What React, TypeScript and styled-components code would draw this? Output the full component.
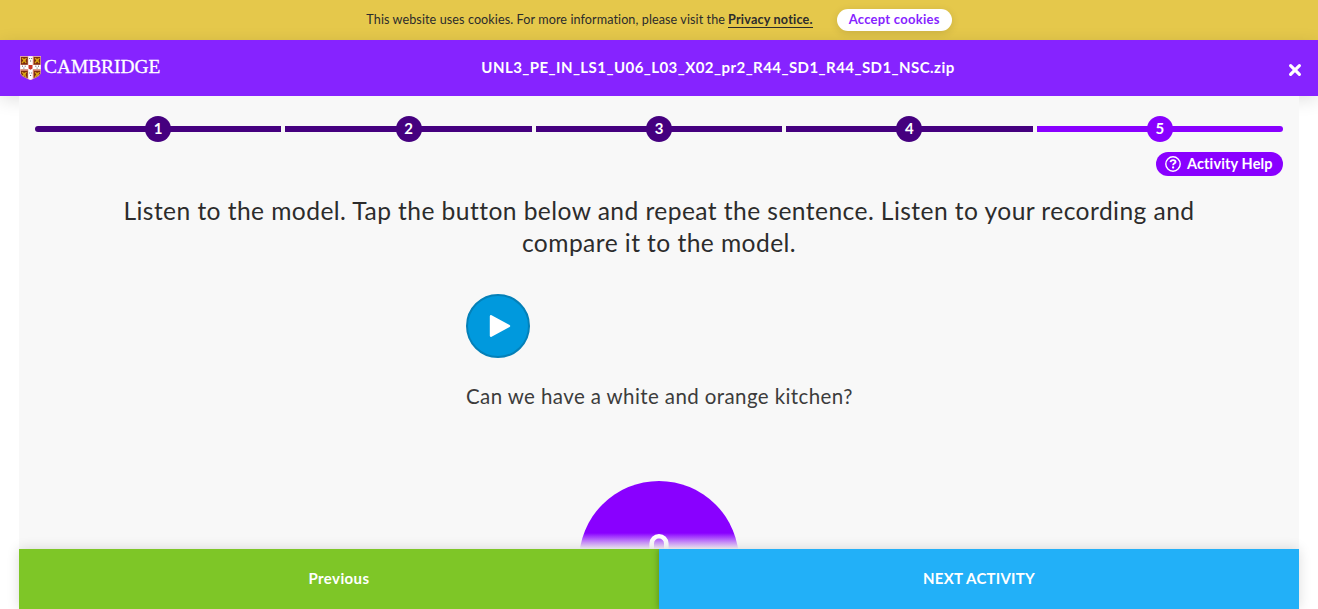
import React from "react";
import styled, { createGlobalStyle } from "styled-components";

const GlobalStyle = createGlobalStyle`
  * { box-sizing: border-box; }
  html, body { height: 100%; overflow: hidden; }
  body { margin: 0; background: #fff; color: #2c2c2c; font-family: Lato, "Open Sans", sans-serif; }
  button { font-family: inherit; border: 0; padding: 0; cursor: pointer; }
`;

const Page = styled.div`
  height: 100vh;
  display: flex;
  flex-direction: column;
  overflow: hidden;
`;

const CookieBar = styled.div`
  flex: 0 0 40px;
  display: flex;
  align-items: center;
  justify-content: center;
  background: #e5c84b;
  font-size: 12.6px;
  letter-spacing: 0.09px;
  white-space: nowrap;
`;

const CookieText = styled.span`
  padding-bottom: 1px;
`;

const PrivacyLink = styled.a`
  margin-left: 3px;
  font-weight: 700;
  letter-spacing: 0.19px;
  line-height: 15px;
  border-bottom: 1px solid #2c2c2c;
`;

const AcceptButton = styled.button`
  width: 115px;
  height: 22px;
  margin-left: 24px;
  border-radius: 11px;
  background: #fff;
  color: #8623ff;
  font-size: 13px;
  font-weight: 700;
  letter-spacing: 0.25px;
  line-height: 20px;
  padding-bottom: 2px;
  box-shadow: 0 2px 8px rgba(0, 0, 0, 0.12);
`;

const Header = styled.header`
  flex: 0 0 56px;
  display: grid;
  grid-template-columns: 274px 1fr 160px;
  align-items: center;
  padding: 0 16px 0 20px;
  background: #8623ff;
  color: #fff;
  box-shadow: 0 4px 18px rgba(0, 0, 0, 0.12);
`;

const Brand = styled.div`
  display: flex;
  align-items: center;
  gap: 3px;
  font: 400 19.4px/24px "Liberation Serif", serif;
`;

const Wordmark = styled.span`
  padding-bottom: 2px;
  -webkit-text-stroke: 0.3px currentColor;
`;

const Title = styled.h1`
  margin: 0;
  padding-bottom: 2px;
  text-align: center;
  white-space: nowrap;
  font-size: 15px;
  font-weight: 700;
  letter-spacing: 0.45px;
`;

const CloseButton = styled.button`
  justify-self: end;
  height: 14px;
  margin-top: 4px;
  background: none;
  color: #fff;
  svg { display: block; }
`;

const Activity = styled.main`
  position: relative;
  flex: 1;
  min-height: 0;
  margin: 0 19px;
  display: flex;
  flex-direction: column;
  background: #f8f8f8;
`;

const Scroller = styled.div`
  flex: 1;
  min-height: 0;
  overflow: hidden;
  display: flex;
  flex-direction: column;
  align-items: center;
  padding: 20px 16px 0;
`;

const Steps = styled.div`
  flex: none;
  width: 100%;
  display: flex;
  gap: 4px;
`;

const Step = styled.div<{ $active?: boolean }>`
  flex: 1;
  height: 26px;
  display: flex;
  align-items: center;
  color: ${(p) => (p.$active ? "#8900ff" : "#45007f")};
  &::before, &::after { content: ""; flex: 1; height: 6px; background: currentColor; }
  &:first-child::before { border-radius: 3px 0 0 3px; }
  &:last-child::after { border-radius: 0 3px 3px 0; }
`;

const StepDot = styled.div`
  width: 26px;
  height: 26px;
  margin: 0 -1px;
  padding-bottom: 2px;
  border-radius: 50%;
  background: currentColor;
  display: flex;
  align-items: center;
  justify-content: center;
  font-size: 15px;
  font-weight: 700;
  line-height: 24px;
  span { color: #fff; }
`;

const HelpButton = styled.button`
  flex: none;
  align-self: flex-end;
  display: flex;
  align-items: center;
  gap: 6px;
  width: 127px;
  height: 24px;
  margin-top: 10px;
  padding-left: 9px;
  border-radius: 12px;
  background: #8900ff;
  color: #fff;
  font-size: 14.5px;
  font-weight: 700;
  letter-spacing: 0.12px;
  white-space: nowrap;
  span { padding-bottom: 2px; }
`;

const Instructions = styled.h2`
  flex: none;
  width: 1120px;
  margin: 19px 0 0;
  text-align: center;
  font-size: 24.6px;
  font-weight: 400;
  line-height: 32px;
  letter-spacing: 0.43px;
`;

const Model = styled.section`
  flex: none;
  width: 386px;
  margin-top: 35px;
`;

const PlayButton = styled.button`
  display: flex;
  align-items: center;
  justify-content: center;
  width: 64px;
  height: 64px;
  border: 2px solid #0480b8;
  border-radius: 50%;
  background: #0099dd;
`;

const Sentence = styled.p`
  margin: 25px 0 2px;
  font-size: 20.5px;
  line-height: 26px;
  letter-spacing: 0.4px;
  white-space: nowrap;
  color: #3c3c3c;
`;

const RecordButton = styled.button`
  flex: none;
  width: 160px;
  height: 160px;
  margin-top: 70px;
  border-radius: 50%;
  background: #8900ff;
  display: flex;
  justify-content: center;
  padding-top: 51px;
`;

const Fade = styled.div`
  position: absolute;
  left: 0;
  right: 0;
  bottom: 60px;
  height: 16px;
  background: linear-gradient(rgba(248, 248, 248, 0), #f8f8f8);
`;

const Footer = styled.footer`
  position: relative;
  flex: 0 0 60px;
  display: flex;
  box-shadow: 0 0 12px rgba(0, 0, 0, 0.14);
`;

const NavButton = styled.button<{ $next?: boolean }>`
  flex: 1;
  padding-bottom: 2px;
  color: #fff;
  background: ${(p) => (p.$next ? "#22b0f8" : "#7ec627")};
  box-shadow: ${(p) => (p.$next ? "-1px 0 6px rgba(0, 0, 0, 0.25)" : "none")};
  clip-path: ${(p) => (p.$next ? "inset(0 0 0 -10px)" : "none")};
  font-size: 15px;
  font-weight: 700;
  letter-spacing: ${(p) => (p.$next ? "0.23px" : "0.4px")};
`;

function Crest() {
  const quarters = [[1, 1], [14, 1], [1, 15], [14, 15]];
  return (
    <svg width="21" height="24" viewBox="0 0 21 24">
      <clipPath id="shield"><path d="M0 0H21V16C21 20 15 22 10.5 24C6 22 0 20 0 16Z" /></clipPath>
      <g clipPath="url(#shield)">
        <path fill="#cf7a62" d="M0 0H21V24H0Z" />
        {quarters.map(([x, y]) => (
          <g key={`${x}-${y}`} transform={`translate(${x} ${y})`}>
            <path fill="#7c2c10" d="M0 0H6.6V7.4H0Z" />
            <path fill="none" stroke="#d9a512" strokeWidth="1.3" d="M1 1.2L2.6 2.5H5M2 4H4.6M1 6L2.4 4.4M5 6L4 4.2M5 1V2" />
          </g>
        ))}
        <path fill="#fff" d="M8.2 0H12.8V9H21V13.3H12.8V24H8.2V13.3H0V9H8.2Z" />
        <path stroke="#5d5460" strokeWidth="1" d="M9.3 2.5h.8M11.3 2.5h.8M10.1 5h1M9.3 17h.8M11.3 17h.8M10.1 19.5h1M2 10.2h1M4.7 10.2h1M3.4 12.1h1M15.3 10.2h1M18 10.2h1M16.6 12.1h1" />
        <path fill="#c93528" d="M8.5 9H12.5V12.5L10.5 13.7L8.5 12.5Z" />
      </g>
      <path fill="none" stroke="#f0c9cf" strokeWidth=".6" d="M.3.3H20.7V16C20.7 20 15 21.7 10.5 23.6C6 21.7 .3 20 .3 16Z" />
    </svg>
  );
}

export default function App() {
  return (
    <Page>
      <GlobalStyle />
      <CookieBar>
        <CookieText>This website uses cookies. For more information, please visit the</CookieText>
        <PrivacyLink>Privacy notice.</PrivacyLink>
        <AcceptButton>Accept cookies</AcceptButton>
      </CookieBar>
      <Header>
        <Brand><Crest /><Wordmark>CAMBRIDGE</Wordmark></Brand>
        <Title>UNL3_PE_IN_LS1_U06_L03_X02_pr2_R44_SD1_R44_SD1_NSC.zip</Title>
        <CloseButton aria-label="Close">
          <svg width="14" height="14" viewBox="0 0 14 14">
            <path d="M2.6 2.6L11.4 11.4M11.4 2.6L2.6 11.4" stroke="currentColor" strokeWidth="3.2" strokeLinecap="round" />
          </svg>
        </CloseButton>
      </Header>
      <Activity>
        <Scroller>
          <Steps>
            {[1, 2, 3, 4, 5].map((n) => (
              <Step key={n} $active={n === 5}><StepDot><span>{n}</span></StepDot></Step>
            ))}
          </Steps>
          <HelpButton>
            <svg width="16" height="16" viewBox="0 0 16 16" fill="none" stroke="currentColor">
              <circle cx="8" cy="8" r="7.2" strokeWidth="1.4" />
              <path strokeWidth="1.9" d="M5.5 6.2C5.7 4.6 7 4.1 8.1 4.1C9.5 4.1 10.5 4.8 10.5 5.9C10.5 7.4 8.1 7.3 8.1 9.3" />
              <circle cx="8.1" cy="11.5" r="1.15" fill="currentColor" stroke="none" />
            </svg>
            <span>Activity Help</span>
          </HelpButton>
          <Instructions>
            Listen to the model. Tap the button below and repeat the sentence. Listen to your recording and compare it to the model.
          </Instructions>
          <Model>
            <PlayButton aria-label="Play">
              <svg width="60" height="60" viewBox="0 0 60 60">
                <path d="M23 20.2L41 30L23 39.8Z" fill="#fff" stroke="#fff" strokeWidth="2.4" strokeLinejoin="round" />
              </svg>
            </PlayButton>
            <Sentence>Can we have a white and orange kitchen?</Sentence>
          </Model>
          <RecordButton aria-label="Record">
            <svg width="40" height="60" viewBox="0 0 40 60" fill="none" stroke="#fff" strokeWidth="4.6">
              <rect x="12.7" y="4.3" width="14.6" height="30" rx="7.3" />
            </svg>
          </RecordButton>
        </Scroller>
        <Fade />
        <Footer>
          <NavButton>Previous</NavButton>
          <NavButton $next>NEXT ACTIVITY</NavButton>
        </Footer>
      </Activity>
    </Page>
  );
}
